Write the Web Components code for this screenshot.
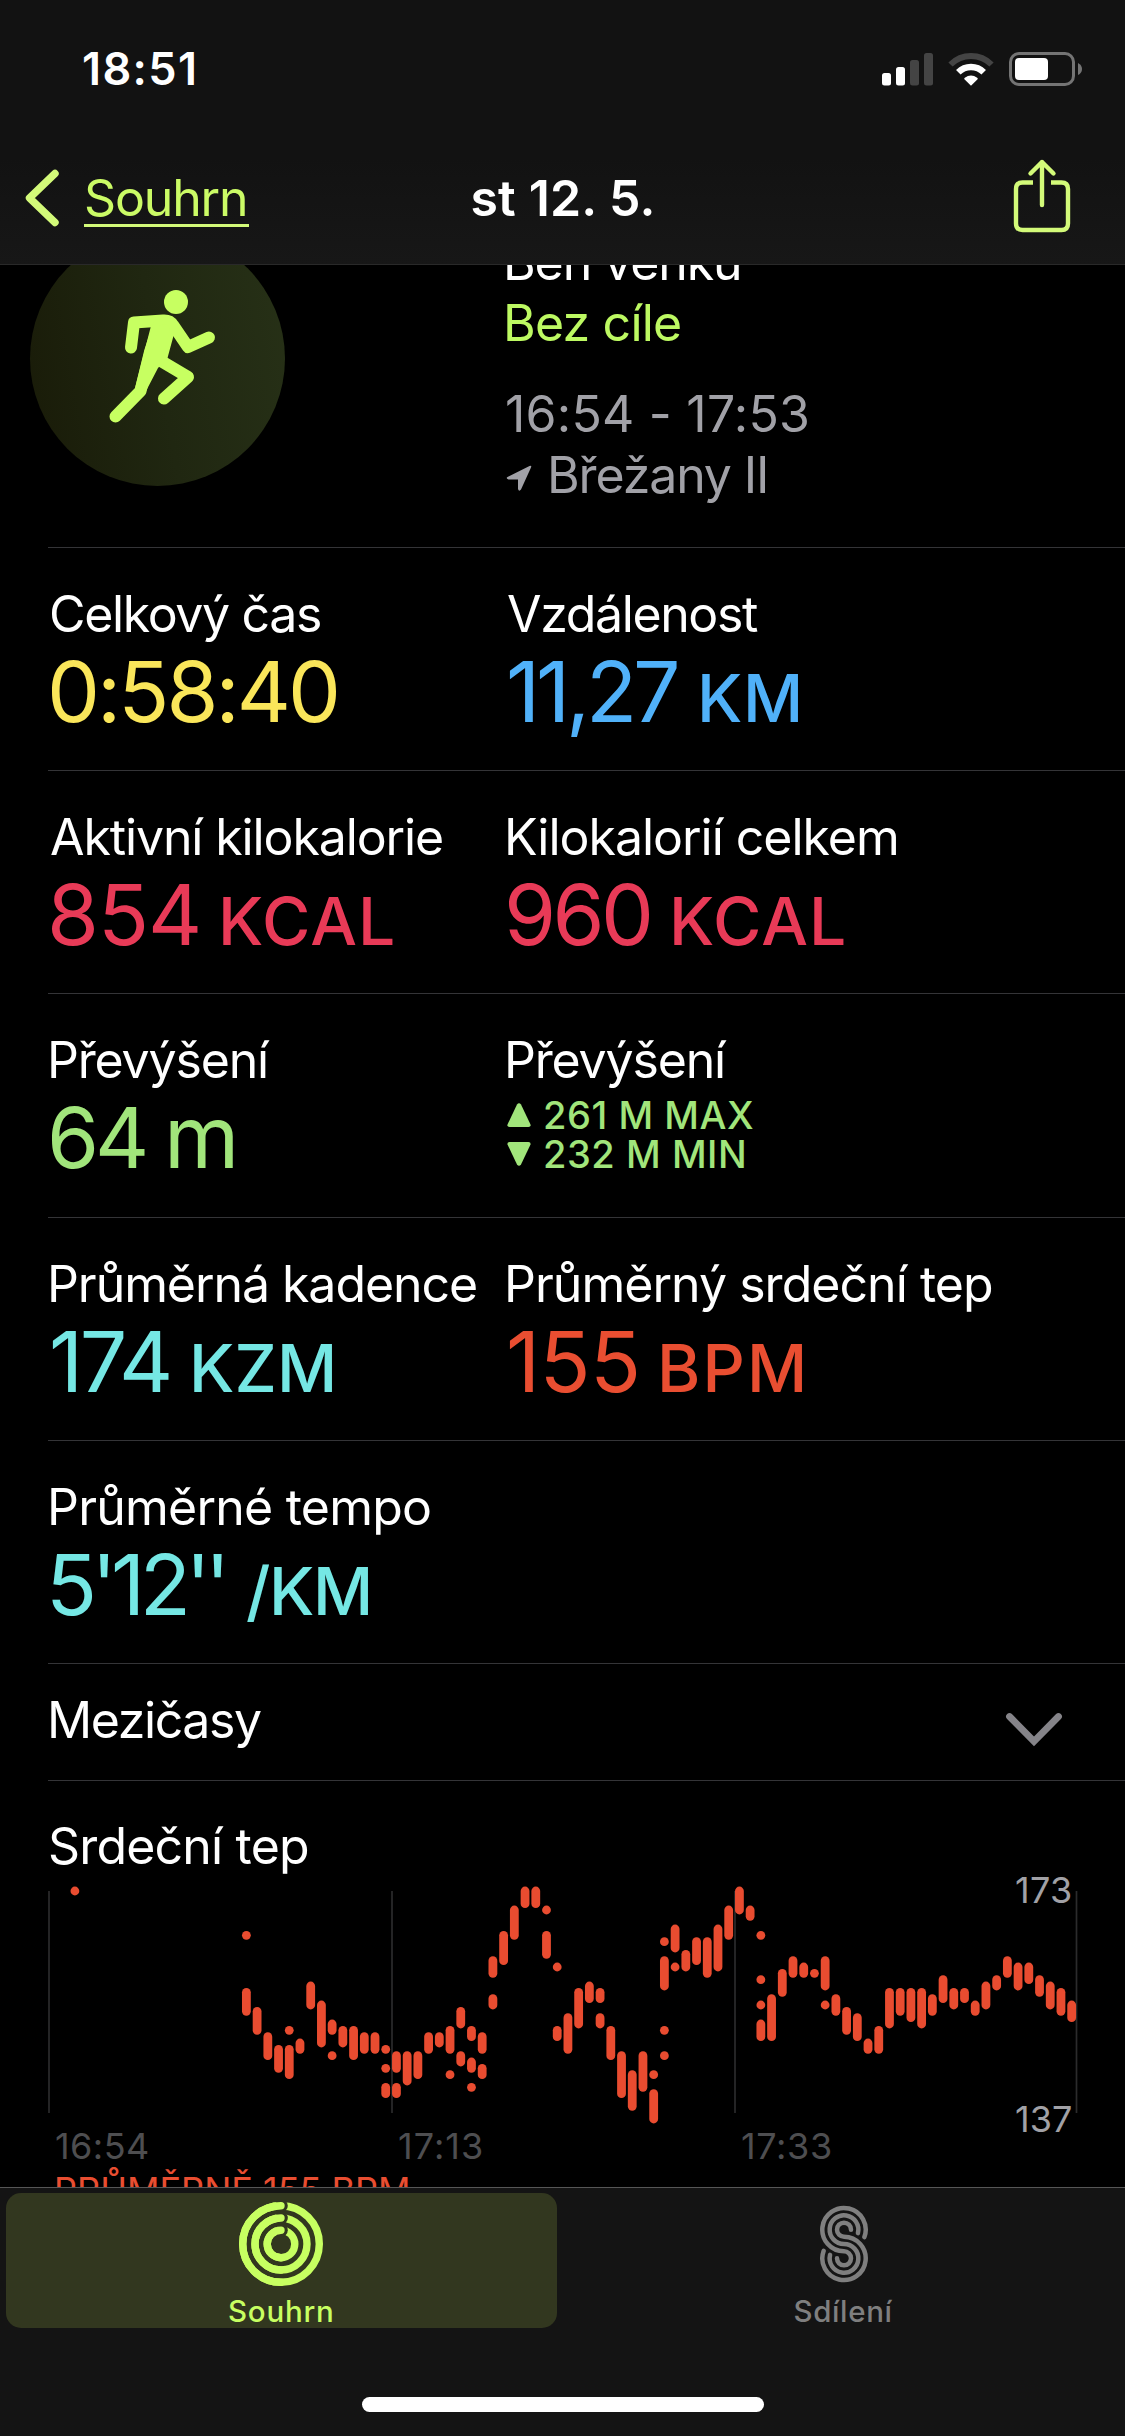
<!DOCTYPE html>
<html lang="cs">
<head>
<meta charset="utf-8">
<title>st 12. 5.</title>
<style>
html, body{
	margin: 0;
	background: #000;
}
body{
	font-family: Inter, "Liberation Sans", sans-serif;
	color: #fff;
}
</style>
</head>
<body>
<workout-screen></workout-screen>

<script>
//========================================================================
// Workout detail, built from small custom elements
//	+ <fit-text ink="N">   ... one line of text, tracked so the glyphs span N px
//	+ <ui-icon name="...">
//	+ <metric-cell label unit ...>, <metric-row>
//	+ <heart-chart>        ... ranges of bpm per column
//	+ <tab-item>, <workout-screen>
//========================================================================

//attach an open shadow root filled with the given markup
const attach = (el,html)=>{
	const tpl = document.createElement("template");
	tpl.innerHTML = html;
	const root = el.attachShadow({mode:"open"});
	root.appendChild(tpl.content.cloneNode(true));
	return root;
};

const measurer = document.createElement("canvas").getContext("2d");

class fitText extends HTMLElement{
	constructor(){
		super();
		attach(this,`<style>
		:host{ display: inline-block; white-space: nowrap; }
		span{ display: inline-block; }
		</style><span><slot></slot></span>`);
	}
	connectedCallback(){
		const ink = parseFloat(this.getAttribute("ink"));
		const text = this.textContent;
		if( !ink || text.length < 1 ){ return; }
		const cs = getComputedStyle(this);
		measurer.font = `${cs.fontWeight} ${cs.fontSize} ${cs.fontFamily}`;
		const m = measurer.measureText(text);
		const natural = m.actualBoundingBoxLeft + m.actualBoundingBoxRight;
		const span = this.shadowRoot.querySelector("span");
		//leading side bearing is removed, the rest goes between the letters
		span.style.marginLeft = `${m.actualBoundingBoxLeft}px`;
		if( text.length > 1 ){
			span.style.letterSpacing = `${(ink-natural)/(text.length-1)}px`;
		}
		this.style.width = `${ink}px`;
	}
}
customElements.define("fit-text",fitText);

//[viewBox, contents]
const ICONS = {
	signal: ["0 0 52 34",`
		<g fill="#fff"><rect x="0" y="21" width="9" height="12.5" rx="2.5"/><rect x="14" y="15" width="9" height="18.5" rx="2.5"/></g>
		<g fill="#444"><rect x="28" y="8" width="9" height="25.5" rx="2.5"/><rect x="42" y="1" width="9" height="32.5" rx="2.5"/></g>`],
	wifi: ["-23 -33 46 34",`
		<path d="M-20.5,-20.5A29,29 0 0 1 20.5,-20.5" fill="none" stroke="#444" stroke-width="6"/>
		<path d="M-12.7,-12.7A18,18 0 0 1 12.7,-12.7" fill="none" stroke="#fff" stroke-width="6.4"/>
		<path d="M0,.8L-6.6,-5.8Q-7.2,-6.6 -6.2,-7.2A10.5,10.5 0 0 1 6.2,-7.2Q7.2,-6.6 6.6,-5.8z" fill="#fff"/>`],
	battery: ["0 0 74 34",`
		<rect x="1.5" y="1.5" width="63" height="31" rx="8.5" fill="none" stroke="#747474" stroke-width="3"/>
		<rect x="6" y="6" width="33" height="22" rx="4" fill="#fff"/>
		<path d="M69,11Q73,13 73,17Q73,21 69,23z" fill="#747474"/>`],
	back: ["0 0 38 60",`
		<path d="M32,5.5L6.5,30L32,54.5" fill="none" stroke="currentColor" stroke-width="7.4" stroke-linecap="round" stroke-linejoin="round"/>`],
	share: ["0 0 60 76",`
		<g fill="none" stroke="currentColor" stroke-width="4.4" stroke-linecap="round" stroke-linejoin="round">
		<path d="M21,24.5H10.5Q4,24.5 4,31V65.5Q4,72 10.5,72H49.5Q56,72 56,65.5V31Q56,24.5 49.5,24.5H39" stroke-linecap="butt"/>
		<path d="M30,47V4M18.5,15.5L30,4L41.5,15.5"/></g>`],
	runner: ["30 231 255 255",`
		<circle cx="176" cy="302" r="12"/>
		<path d="M152,322H168L174,334L167.5,358L158,368L145,393L135,388z"/>
		<g fill="none" stroke="currentColor" stroke-width="12" stroke-linecap="round" stroke-linejoin="round">
		<path d="M131,347.5L134,322.5L163,320.5Q170,320 173,325L188,347L209,337.5"/>
		<path d="M159,325L150,352L140.5,391L115.5,416.5"/>
		<path d="M164,330L156,358L188,377L164,398.5"/></g>`],
	location: ["0 0 28 28",`
		<path d="M2.5,13L24.5,2Q27,1 26,3.5L16,25.5Q14,28 13,25V15.5H3.5Q.5,14.5 2.5,13z"/>`],
	up: ["0 0 24 24",`<path d="M10,1.5Q12,-1 14,1.5L23.5,21.5Q24,24 21.5,24H2.5Q0,24 .5,21.5z"/>`],
	down: ["0 0 24 24",`<path d="M10,22.5Q12,25 14,22.5L23.5,2.5Q24,0 21.5,0H2.5Q0,0 .5,2.5z"/>`],
	chevron: ["0 0 60 36",`
		<path d="M5.5,5.5L30,30.5L54.5,5.5" fill="none" stroke="currentColor" stroke-width="6.8" stroke-linecap="round" stroke-linejoin="miter"/>`],
	rings: ["-43 -43 86 86",[38.3,26,13.8].map(r=>`
		<circle r="${r}" fill="none" stroke="currentColor" stroke-width="7.4"/>
		<circle cx="0.5" cy="${-r}" r="6.3" fill="#32371f"/>
		<path d="M0,${r}A${r},${r} 0 0 1 0,${-r}" fill="none" stroke="currentColor" stroke-width="7.4" stroke-linecap="round"/>`).join("")],
	//three parallel strands, each one runs from the upper loop into the lower one
	sharing: ["-25 -39 50 78",[[21.7,20],[14.35,14],[7,0]].map(([r,deg],i,all)=>{
		const [q,qdeg] = all[2-i], c = 14.35;
		const at = (rad,d,s)=>`${s*rad*Math.cos(d*Math.PI/180)},${s*(rad*Math.sin(d*Math.PI/180)-c)}`;
		return `<path d="M${at(r,deg,1)}A${r},${r} 0 1 0 0,${r-c}A${q},${q} 0 1 1 ${at(q,qdeg,-1)}"
			fill="none" stroke="currentColor" stroke-width="4.5" stroke-linecap="round"/>`;
	}).join("")],
};

class uiIcon extends HTMLElement{
	constructor(){
		super();
		const [box,body] = ICONS[this.getAttribute("name")];
		const [,,w,h] = box.split(" ");
		attach(this,`
		<style>
		:host{ display: block; flex: none; width: ${w}px; height: ${h}px; }
		svg{ display: block; }
		</style>
		<svg viewBox="${box}" width="${w}" height="${h}" fill="currentColor">${body}</svg>`);
	}
}
customElements.define("ui-icon",uiIcon);

class statusBar extends HTMLElement{
	constructor(){
		super();
		attach(this,`
		<style>
		:host{
			display: flex; justify-content: space-between; box-sizing: border-box;
			height: 132px; padding: 42px 42px 0 84px;
		}
		fit-text{ font-size: 45px; font-weight: 600; line-height: 54px; }
		div{ display: flex; align-items: flex-start; padding-top: 10px; }
		.wifi{ margin: 0 15px 0 14px; }
		</style>
		<fit-text ink="110">18:51</fit-text>
		<div>
			<ui-icon name="signal"></ui-icon>
			<ui-icon class="wifi" name="wifi"></ui-icon>
			<ui-icon name="battery"></ui-icon>
		</div>`);
	}
}
customElements.define("status-bar",statusBar);

class navBar extends HTMLElement{
	constructor(){
		super();
		attach(this,`
		<style>
		:host{
			display: grid; grid-template-columns: 1fr auto 1fr; align-items: center;
			height: 132px; font-size: 50px; line-height: 60px;
		}
		.back{ display: flex; align-items: center; padding-left: 23px; color: #d3fa79; }
		.link{ margin-left: 23px; padding: 0 4px 0 2px; height: 54px; color: #cbfb66; border-bottom: 3px solid #d3fa79; line-height: 56px; }
		.title{ font-weight: 600; }
		.share{ justify-self: end; margin-right: 53px; color: #d3fa79; margin-top: -4px; }
		</style>
		<div class="back"><ui-icon name="back"></ui-icon><div class="link"><fit-text ink="159">Souhrn</fit-text></div></div>
		<fit-text class="title" ink="180">st 12. 5.</fit-text>
		<ui-icon class="share" name="share"></ui-icon>`);
	}
}
customElements.define("nav-bar",navBar);

class workoutSummary extends HTMLElement{
	constructor(){
		super();
		attach(this,`
		<style>
		:host{
			display: grid; grid-template-columns: 477px 1fr; box-sizing: border-box;
			height: 316px; margin-top: -34px; padding-left: 30px;
			font-size: 50px; line-height: 63px;
		}
		.badge{
			width: 255px; height: 255px; border-radius: 50%; color: #c7ff61;
			background: linear-gradient(80deg,#191b08,#202711 50%,#273117);
		}
		.goal{ color: #bdf962; }
		.dim{ color: #a1a1a7; }
		.when{ margin-top: 30px; }
		.place{ display: flex; align-items: center; gap: 18px; margin-left: -2px; }
		.place ui-icon{ margin-top: 4px; }
		.line{ height: 61px; }
		.line.place{ height: 63px; }
		</style>
		<div class="badge"><ui-icon name="runner"></ui-icon></div>
		<div>
			<div class="line"><fit-text ink="232">Běh venku</fit-text></div>
			<div class="line goal"><fit-text ink="173">Bez cíle</fit-text></div>
			<div class="line dim when"><fit-text ink="300">16:54 - 17:53</fit-text></div>
			<div class="line dim place"><ui-icon name="location"></ui-icon><fit-text ink="215">Břežany II</fit-text></div>
		</div>`);
	}
}
customElements.define("workout-summary",workoutSummary);

class metricRow extends HTMLElement{
	constructor(){
		super();
		attach(this,`
		<style>
		:host{
			display: grid; grid-template-columns: 457px 1fr; box-sizing: border-box;
			height: 223.2px; margin-left: 48px; padding: 36px 0 0 3px;
			border-bottom: 1px solid #343437;
		}
		</style>
		<slot></slot>`);
	}
}
customElements.define("metric-row",metricRow);

class metricCell extends HTMLElement{
	constructor(){
		super();
		const at = n=>this.getAttribute(n);
		attach(this,`
		<style>
		:host{ display: block; white-space: nowrap; }
		.label{ font-size: 50px; line-height: 60px; height: 60px; }
		.value{ display: flex; align-items: baseline; gap: 25px; font-size: 84px; line-height: 96px; padding-left: 1px; color: var(--tint); }
		.unit{ font-size: 66px; font-weight: 500; line-height: 1; }
		.unit.low{ font-size: 86px; font-weight: 400; }
		</style>
		<div class="label"><fit-text ink="${at("label-ink")}">${at("label")}</fit-text></div>
		<slot>
			<div class="value">
				<fit-text ink="${at("ink")}">${at("value")}</fit-text>
				${at("unit") ? `<fit-text class="unit ${at("unit")==="m"?"low":""}" ink="${at("unit-ink")}">${at("unit")}</fit-text>` : ""}
			</div>
		</slot>`);
	}
}
customElements.define("metric-cell",metricCell);

class elevationRange extends HTMLElement{
	constructor(){
		super();
		attach(this,`
		<style>
		:host{ display: block; padding-top: 6px; font-size: 38px; font-weight: 500; line-height: 39px; color: var(--tint); }
		div{ display: flex; align-items: center; gap: 14px; height: 39px; }
		ui-icon{ margin-left: -1px; margin-top: -1px; }
		</style>
		<div><ui-icon name="up"></ui-icon><fit-text ink="208">261 M MAX</fit-text></div>
		<div><ui-icon name="down"></ui-icon><fit-text ink="199">232 M MIN</fit-text></div>`);
	}
}
customElements.define("elevation-range",elevationRange);

class splitsRow extends HTMLElement{
	constructor(){
		super();
		attach(this,`
		<style>
		:host{
			display: flex; justify-content: space-between; box-sizing: border-box;
			height: 117px; margin-left: 48px; padding: 26px 61px 0 3px;
			border-bottom: 1px solid #343437; font-size: 50px; line-height: 60px;
		}
		ui-icon{ color: #858489; margin-top: 21px; }
		</style>
		<fit-text ink="210">Mezičasy</fit-text>
		<ui-icon name="chevron"></ui-icon>`);
	}
}
customElements.define("splits-row",splitsRow);

//column: ranges counted in bpm below the maximum
const BPM_DROP = [
	"0",,,,,,,,,,,,,,,,
	"7 16-19","19-22","23-26","25-28","22 25-29","24-25","15-18","18-24","21-22 26","22-24",
	"22-26","23-25","23-25","25 28 31-32","26-28 31-32","26-30","26-29","23-25","23-24","22-25 29",
	"19-21 26-27","22-23 27-28 31","23-25 28-29","11-13 17-18","7-11","3-7","0-2","0-2","3 7-10","12 22-23",
	"20-25","16-21","15-17","16-17 20-21","22-26","26-32","29-34","26-31","29 32-36","8 11-15 22 26",
	"6-9 12","10-12","8-11","8-13","6-12","3-7","0-3","3-4","7 14 18 21-23","17-23",
	"13-16","11-13","12-13","13","11-15 18","17-19","19-22","20-23","24-25","22-25",
	"16-21","16-19","16-20","16-21","17-19","14-17","16-18","16-17","18-19","15-18",
	"14-15","11-13","12-15","12-14","14-16","15-18","16-19","18-20",
];

class heartChart extends HTMLElement{
	constructor(){
		super();
		const X0 = 74.9, DX = 10.718, Y0 = 15, DY = 6.333, R = 4.4;
		let bars = "";
		BPM_DROP.forEach((ranges,i)=>{
			for(let range of ranges.split(" ")){
				let [a,b=a] = range.split("-").map(Number);
				bars += `<rect x="${X0+DX*i-R}" y="${Y0+DY*a-R}" width="${2*R}" height="${DY*(b-a)+2*R}" rx="${R}"/>`;
			}
		});
		attach(this,`
		<style>
		:host{ display: block; padding-top: 35px; font-size: 36px; line-height: 44px; white-space: nowrap; }
		.title{ font-size: 50px; line-height: 60px; height: 60px; padding-left: 50px; }
		.plot{ position: relative; height: 248px; }
		svg{ display: block; }
		.scale{
			position: absolute; top: -8px; right: 54px; height: 273px;
			display: flex; flex-direction: column; justify-content: space-between; color: #a1a1a6;
		}
		.times{ display: grid; grid-template-columns: 343px 343px 1fr; height: 44px; padding-left: 56px; color: #4e4e50; }
		.avg{ padding-left: 57px; color: #e94e31; }
		</style>
		<div class="title"><fit-text ink="258">Srdeční tep</fit-text></div>
		<div class="plot">
			<svg viewBox="0 0 1125 248" width="1125" height="248">
				<path d="M49,15V237M392,15V237M735,15V237M1076.5,15V237" stroke="#2b2b2c" stroke-width="1.7"/>
				<g fill="#e94c30">${bars}</g>
			</svg>
			<div class="scale"><fit-text ink="55">173</fit-text><fit-text ink="55">137</fit-text></div>
		</div>
		<div class="times"><fit-text ink="92">16:54</fit-text><fit-text ink="83">17:13</fit-text><fit-text ink="89">17:33</fit-text></div>
		<div class="avg"><fit-text ink="351">PRŮMĚRNĚ 155 BPM</fit-text></div>`);
	}
}
customElements.define("heart-chart",heartChart);

class tabItem extends HTMLElement{
	constructor(){
		super();
		attach(this,`
		<style>
		:host{
			display: flex; flex-direction: column; align-items: center; box-sizing: border-box;
			width: 552px; height: 135px; border-radius: 15px;
			font-size: 29.5px; font-weight: 500; line-height: 34px; color: #7f7f7f;
		}
		:host([selected]){ background: #32371f; color: #c7ff61; padding-right: 2px; }
		.icon{ display: grid; place-items: center; flex: none; height: 101px; }
		</style>
		<div class="icon"><ui-icon name="${this.getAttribute("icon")}"></ui-icon></div>
		<fit-text ink="${this.getAttribute("ink")}">${this.getAttribute("label")}</fit-text>`);
	}
}
customElements.define("tab-item",tabItem);

class tabBar extends HTMLElement{
	constructor(){
		super();
		attach(this,`
		<style>
		:host{
			display: block; box-sizing: border-box; height: 249px; padding: 5px 6px 0;
			border-top: 1px solid #565656; background: #141414;
		}
		.tabs{ display: flex; gap: 11px; }
		.home{ width: 402px; height: 15px; margin: 69px auto 0; border-radius: 8px; background: #fff; }
		</style>
		<div class="tabs">
			<tab-item selected icon="rings" label="Souhrn" ink="103"></tab-item>
			<tab-item icon="sharing" label="Sdílení" ink="98"></tab-item>
		</div>
		<div class="home"></div>`);
	}
}
customElements.define("tab-bar",tabBar);

class workoutScreen extends HTMLElement{
	constructor(){
		super();
		attach(this,`
		<style>
		:host{ display: flex; flex-direction: column; width: 1125px; height: 2436px; overflow: hidden; background: #000; }
		header{ flex: none; height: 264px; border-bottom: 1px solid #292929; background: linear-gradient(#121212 60%,#171717); }
		main{ flex: 1; min-height: 0; overflow: hidden; }
		tab-bar{ flex: none; }
		.line{ height: 1px; margin-left: 48px; background: #343437; }
		.time{ --tint: #fae65a; }
		.dist{ --tint: #50b1f9; }
		.kcal{ --tint: #e83a57; }
		.elev{ --tint: #a1e57b; }
		.pace{ --tint: #75e7e4; }
		.heart{ --tint: #e94e31; }
		</style>
		<header>
			<status-bar></status-bar>
			<nav-bar></nav-bar>
		</header>
		<main>
			<workout-summary></workout-summary>
			<div class="line"></div>
			<metric-row>
				<metric-cell class="time" label="Celkový čas" label-ink="269" value="0:58:40" ink="284"></metric-cell>
				<metric-cell class="dist" label="Vzdálenost" label-ink="250" value="11,27" ink="168" unit="KM" unit-ink="96"></metric-cell>
			</metric-row>
			<metric-row>
				<metric-cell class="kcal" label="Aktivní kilokalorie" label-ink="391" value="854" ink="146" unit="KCAL" unit-ink="170"></metric-cell>
				<metric-cell class="kcal" label="Kilokalorií celkem" label-ink="388" value="960" ink="140" unit="KCAL" unit-ink="170"></metric-cell>
			</metric-row>
			<metric-row>
				<metric-cell class="elev" label="Převýšení" label-ink="219" value="64" ink="93" unit="m" unit-ink="66"></metric-cell>
				<metric-cell class="elev" label="Převýšení" label-ink="219"><elevation-range></elevation-range></metric-cell>
			</metric-row>
			<metric-row>
				<metric-cell class="pace" label="Průměrná kadence" label-ink="425" value="174" ink="117" unit="KZM" unit-ink="138"></metric-cell>
				<metric-cell class="heart" label="Průměrný srdeční tep" label-ink="484" value="155" ink="128" unit="BPM" unit-ink="140"></metric-cell>
			</metric-row>
			<metric-row>
				<metric-cell class="pace" label="Průměrné tempo" label-ink="379" value="5'12''" ink="170" unit="/KM" unit-ink="121"></metric-cell>
			</metric-row>
			<splits-row></splits-row>
			<heart-chart></heart-chart>
		</main>
		<tab-bar></tab-bar>`);
	}
}
customElements.define("workout-screen",workoutScreen);
</script>
</body>
</html>
